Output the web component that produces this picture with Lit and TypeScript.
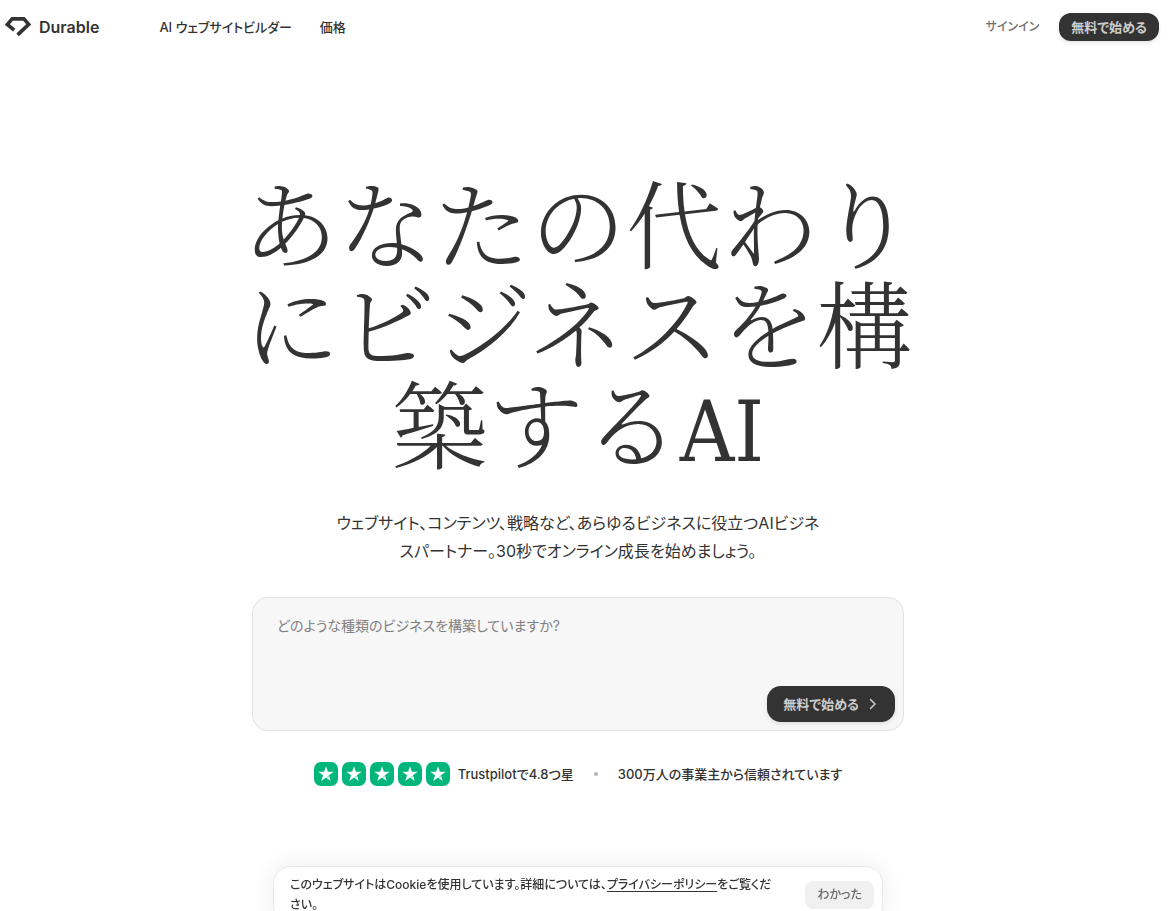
import { LitElement, html, css, svg } from "lit";
import { customElement, state } from "lit/decorators.js";

const chevron = html`<svg class="chevron" viewBox="0 0 8 12" aria-hidden="true">
  <path d="M1.5 1.5 6 6l-4.5 4.5" fill="none" stroke="currentColor" stroke-width="1.5" stroke-linecap="round" stroke-linejoin="round" />
</svg>`;

const star = html`<svg class="star" viewBox="0 0 24 24" aria-hidden="true">
  <rect width="24" height="24" rx="7" fill="#00b67a" />
  ${svg`<path d="M12 4.2l1.85 5.6h5.85l-4.75 3.45 1.8 5.65L12 15.4l-4.75 3.5 1.8-5.65L4.3 9.8h5.85z" fill="#fff" />
  <path d="M12 15.4l2.95-2.15.65 2z" fill="#8fdfc2" />`}
</svg>`;

@customElement("app-root")
export class AppRoot extends LitElement {
  @state() private business = "";
  @state() private consentGiven = false;

  static styles = css`
    :host {
      display: block;
      min-height: 100vh;
      overflow: hidden;
      box-sizing: border-box;
      background: #fff;
      color: #333;
      font-family: Inter, "Noto Sans CJK JP", sans-serif;
      font-feature-settings: "palt";
      font-size: 13px;
      line-height: 20px;
    }
    * {
      box-sizing: border-box;
    }
    a {
      color: inherit;
      text-decoration: none;
    }
    button,
    textarea {
      font: inherit;
      font-feature-settings: inherit;
      border: 0;
      margin: 0;
    }
    button {
      cursor: pointer;
      white-space: nowrap;
    }
    .header {
      display: flex;
      align-items: center;
      height: 54px;
      padding: 0 13px 0 5px;
    }
    .brand {
      display: flex;
      align-items: center;
      gap: 8px;
      font-size: 16px;
      font-weight: 600;
    }
    .logo {
      width: 26px;
      height: 20px;
    }
    .nav {
      display: flex;
      gap: 28px;
      margin-left: 60px;
      font-weight: 500;
      white-space: nowrap;
    }
    .account {
      display: flex;
      align-items: center;
      gap: 20px;
      margin-left: auto;
    }
    .signin {
      color: #707070;
      font-size: 12px;
      font-weight: 500;
    }
    .primary {
      background: #333;
      color: #ccc;
      font-weight: 700;
      box-shadow: 0 2px 4px rgba(0, 0, 0, 0.1);
    }
    .small {
      height: 28px;
      padding: 0 12px;
      border-radius: 12px;
    }
    .hero {
      display: flex;
      flex-direction: column;
      align-items: center;
      padding: 116px 16px 0 0;
    }
    .title {
      margin: 0;
      font-family: "Noto Serif CJK JP", "Noto Sans CJK JP", serif;
      font-feature-settings: normal;
      font-size: 96px;
      font-weight: 300;
      line-height: 100px;
      text-align: center;
    }
    .latin {
      font-family: "DejaVu Serif Condensed", "DejaVu Serif", serif;
      font-size: 84px;
      line-height: 1;
    }
    .lead {
      margin: 35px 0 32px;
      font-size: 16px;
      line-height: 28px;
      text-align: center;
    }
    .prompt {
      display: flex;
      flex-direction: column;
      width: 100%;
      max-width: 652px;
      padding: 16px 8px 8px 24px;
      border: 1px solid #e3e3e3;
      border-radius: 16px;
      background: #f7f7f7;
    }
    .field {
      height: 72px;
      padding: 0;
      background: none;
      color: #333;
      font-size: 14px;
      line-height: 24px;
      resize: none;
      outline: none;
    }
    .field::placeholder {
      color: #808080;
      opacity: 1;
    }
    .start {
      display: flex;
      align-items: center;
      gap: 10px;
      align-self: flex-end;
      height: 36px;
      padding: 0 18px 0 16px;
      border-radius: 14px;
    }
    .chevron {
      width: 8px;
      height: 12px;
    }
    .trust {
      display: flex;
      align-items: center;
      justify-content: center;
      margin-top: 31px;
      font-weight: 500;
      white-space: nowrap;
    }
    .stars {
      display: flex;
      gap: 4px;
      margin-right: 8px;
    }
    .star {
      width: 24px;
      height: 24px;
    }
    .dot {
      width: 4px;
      height: 4px;
      margin: 0 20px;
      border-radius: 50%;
      background: #b3b3b3;
    }
    .consent {
      position: fixed;
      bottom: -13px;
      left: 0;
      right: 16px;
      display: flex;
      align-items: center;
      gap: 12px;
      max-width: 610px;
      margin: 0 auto;
      padding: 8px 8px 8px 16px;
      border: 1px solid #e8e8e8;
      border-radius: 18px;
      background: #fff;
      box-shadow: 0 0 24px rgba(0, 0, 0, 0.08);
      font-size: 12px;
      font-weight: 500;
    }
    .notice {
      flex: 1;
      margin: 0;
    }
    .policy {
      text-decoration: underline;
      text-underline-offset: 2px;
    }
    .accept {
      height: 28px;
      padding: 0 12px;
      border-radius: 8px;
      background: #f0f0f0;
      color: #666;
    }
  `;

  render() {
    return html`
      <header class="header">
        <a class="brand" href="#">
          <svg class="logo" viewBox="0 0 26 20" aria-hidden="true">
            <path d="M9.2 13.2 2.3 7.5 7.2 1.9h11.6l4.9 5.5L12.6 17.9" fill="none" stroke="#333" stroke-width="3.6" />
          </svg>
          <span>Durable</span>
        </a>
        <nav class="nav">
          <a href="#builder">AI ウェブサイトビルダー</a>
          <a href="#pricing">価格</a>
        </nav>
        <div class="account">
          <a class="signin" href="#signin">サインイン</a>
          <button class="primary small" type="button">無料で始める</button>
        </div>
      </header>
      <main class="hero">
        <h1 class="title">あなたの代わり<br />にビジネスを構<br />築する<span class="latin">AI</span></h1>
        <p class="lead">
          ウェブサイト、コンテンツ、戦略など、あらゆるビジネスに役立つAIビジネ<br />スパートナー。30秒でオンライン成長を始めましょう。
        </p>
        <form class="prompt" @submit=${(e: Event) => e.preventDefault()}>
          <textarea
            class="field"
            aria-label="どのような種類のビジネスを構築していますか?"
            placeholder="どのような種類のビジネスを構築していますか?"
            .value=${this.business}
            @input=${(e: Event) => (this.business = (e.target as HTMLTextAreaElement).value)}
          ></textarea>
          <button class="primary start" type="submit"><span>無料で始める</span>${chevron}</button>
        </form>
        <div class="trust">
          <div class="stars">${Array.from({ length: 5 }, () => star)}</div>
          <span>Trustpilotで4.8つ星</span>
          <span class="dot"></span>
          <span>300万人の事業主から信頼されています</span>
        </div>
      </main>
      ${this.consentGiven
        ? null
        : html`<aside class="consent">
            <p class="notice">
              このウェブサイトはCookieを使用しています。詳細については、<a class="policy" href="#privacy">プライバシーポリシー</a>をご覧くだ<br />さい。
            </p>
            <button class="accept" type="button" @click=${() => (this.consentGiven = true)}>わかった</button>
          </aside>`}
    `;
  }
}
